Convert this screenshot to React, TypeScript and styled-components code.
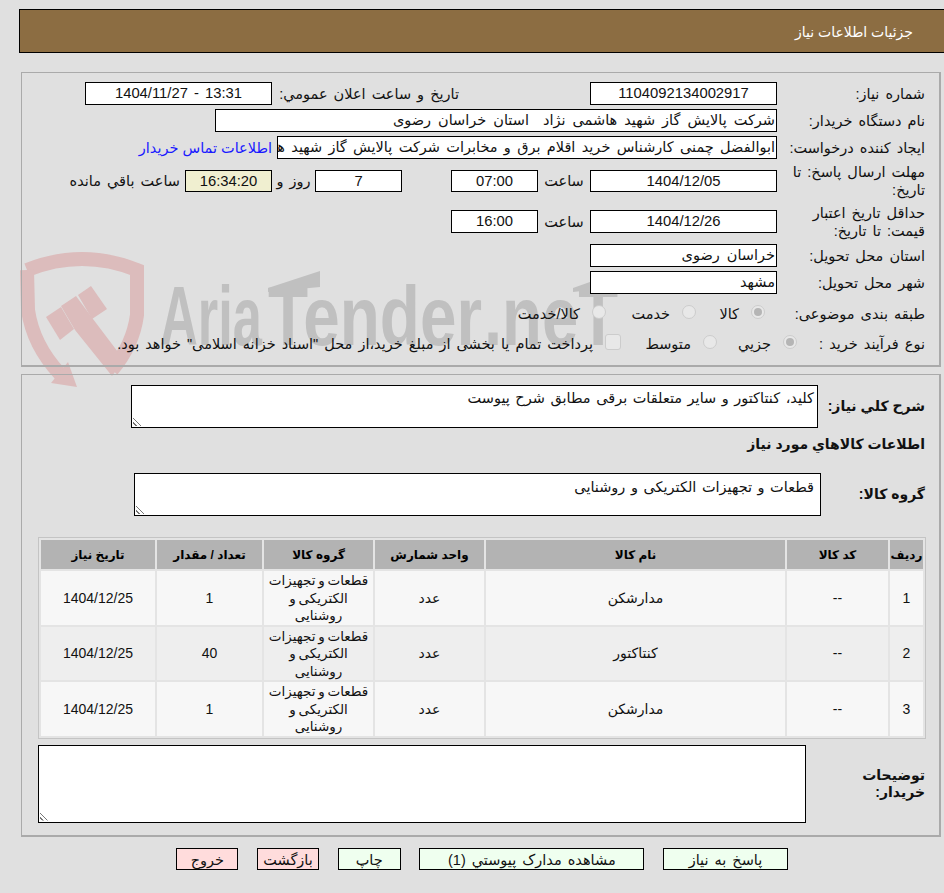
import styled, { createGlobalStyle } from "styled-components";

const GlobalStyle = createGlobalStyle`
    html, body {
        margin: 0;
        padding: 0;
        background: #e0e0e0;
    }
    body {
        font-family: "Liberation Sans", "DejaVu Sans", sans-serif;
        font-size: 14.5px;
        word-spacing: 2px;
        color: #111;
        overflow: hidden;
    }
`;

const Page = styled.div`
    position: relative;
    width: 944px;
    height: 893px;
    direction: rtl;
    overflow: hidden;
`;

const Header = styled.div`
    height: 42px;
    margin: 9px 0 0 19px;
    border: 1px solid #000;
    border-right: none;
    background: #8c6d42;
    color: #fff;
    font-size: 14px;
    line-height: 44px;
    padding-right: 31px;
    word-spacing: 0;
`;

const Panel = styled.div`
    position: relative;
    box-sizing: border-box;
    margin: 0 3px 0 0;
    margin-left: 21px;
    border: 1px solid #aaa;
    border-width: 1px 2px 2px 1px;
`;

const TopPanel = styled(Panel)`
    margin-top: 19px;
    height: 295px;
    padding: 9px 14px 0 0;
`;

const BottomPanel = styled(Panel)`
    margin-top: 7px;
    height: 463px;
    padding: 10px 14px 0 0;
`;

const Watermark = styled.svg`
    position: absolute;
    left: 0;
    top: 0;
    width: 944px;
    height: 400px;
    direction: ltr;
    word-spacing: 0;
`;

const Row = styled.div<{ $h?: number; $mt?: number }>`
    position: relative;
    display: flex;
    align-items: center;
    height: ${(p) => p.$h ?? 23}px;
    margin-top: ${(p) => p.$mt ?? 4}px;
`;

const Label = styled.div`
    width: 148px;
    flex: none;
    line-height: 18px;
    padding-left: 2px;
    box-sizing: border-box;
`;

const Field = styled.div<{ $w: number; $center?: boolean; $bg?: string; $ws?: number }>`
    width: ${(p) => p.$w}px;
    height: 100%;
    flex: none;
    box-sizing: border-box;
    border: 1px solid #000;
    background: ${(p) => p.$bg ?? "#fff"};
    text-align: ${(p) => (p.$center ? "center" : "right")};
    padding: 0 1px;
    font-size: ${(p) => (p.$center ? 14.8 : 14.5)}px;
    word-spacing: ${(p) => p.$ws ?? (p.$center ? 2 : 3)}px;
    line-height: 21px;
    white-space: nowrap;
    overflow: hidden;
`;

const Caption = styled.div<{ $w?: number; $pr?: number }>`
    flex: none;
    box-sizing: border-box;
    width: ${(p) => (p.$w ? `${p.$w}px` : "auto")};
    padding-right: ${(p) => p.$pr ?? 0}px;
    text-align: ${(p) => (p.$pr ? "right" : "center")};
    white-space: nowrap;
`;

const Link = styled.a`
    color: #1a1aff;
    margin-right: 5px;
    white-space: nowrap;
    word-spacing: 0;
`;

const Radio = styled.span<{ $on?: boolean }>`
    flex: none;
    width: 14px;
    height: 14px;
    margin-bottom: 5px;
    border-radius: 50%;
    border: 1px solid #ccc;
    background: #e8e8e8;
    box-sizing: border-box;
    display: flex;
    align-items: center;
    justify-content: center;
    &::after {
        content: "";
        display: ${(p) => (p.$on ? "block" : "none")};
        width: 8px;
        height: 8px;
        border-radius: 50%;
        background: #b5b5b5;
    }
`;

const Check = styled.span`
    flex: none;
    width: 16px;
    height: 16px;
    margin-bottom: 5px;
    border-radius: 3px;
    border: 1px solid #ccc;
    background: #e8e8e8;
    box-sizing: border-box;
`;

const Choice = styled.div<{ $w: number; $mr?: number }>`
    flex: none;
    width: ${(p) => p.$w}px;
    margin-right: ${(p) => p.$mr ?? 0}px;
    display: flex;
    align-items: center;
    gap: 12px;
    white-space: nowrap;
`;

const BoldRow = styled.div<{ $mt?: number }>`
    display: flex;
    align-items: center;
    margin-top: ${(p) => p.$mt ?? 0}px;
`;

const Heading = styled.div<{ $mt?: number }>`
    margin-top: ${(p) => p.$mt ?? 0}px;
    font-size: 14px;
    font-weight: bold;
    line-height: 17px;
    word-spacing: 0;
`;

const SideLabel = styled.div<{ $w: number; $pl?: number }>`
    width: ${(p) => p.$w}px;
    box-sizing: border-box;
    padding-left: ${(p) => p.$pl ?? 0}px;
    flex: none;
    font-size: 14px;
    font-weight: bold;
    line-height: 17px;
    word-spacing: 0;
`;

const Area = styled.div<{ $w: number; $h: number; $pr?: number; $pt?: number }>`
    position: relative;
    width: ${(p) => p.$w}px;
    height: ${(p) => p.$h}px;
    flex: none;
    box-sizing: border-box;
    border: 1px solid #000;
    background: #fff;
    padding: ${(p) => p.$pt ?? 4}px ${(p) => p.$pr ?? 3}px 0 3px;
    word-spacing: 1.5px;
    &::after {
        content: "";
        position: absolute;
        left: 1px;
        bottom: 1px;
        width: 9px;
        height: 9px;
        background: repeating-linear-gradient(45deg, transparent 0 2px, #777 2px 3px);
        clip-path: polygon(0 0, 100% 100%, 0 100%);
    }
`;

const ItemsTable = styled.table`
    width: 888px;
    margin: 21px -1px 0 0;
    border-collapse: separate;
    border-spacing: 2px;
    border: 1px solid #c4c4c4;
    background: #e4e4e4;
    table-layout: fixed;
    text-align: center;
    font-size: 14px;
    word-spacing: 0;

    th {
        background: #b3b3b3;
        height: 29px;
        padding: 0;
        font-size: 12px;
        color: #000;
    }
    td {
        height: 52.5px;
        padding: 1px 0 0;
        line-height: 17.5px;
    }
    tbody tr:nth-child(odd) td {
        background: #f7f7f7;
    }
    tbody tr:nth-child(even) td {
        background: #eeeeee;
    }
`;

const GroupCell = styled.td`
    && {
        padding: 1px 4px 0;
    }
    font-size: 13.5px;
    word-spacing: -1px;
`;

const Col = styled.col<{ $w: number }>`
    width: ${(p) => p.$w}px;
`;

const Footer = styled.div`
    display: flex;
    margin: 11px 156px 0 0;
    gap: 18.67px;
`;

const Action = styled.button<{ $w: number; $danger?: boolean }>`
    width: ${(p) => p.$w}px;
    height: 22px;
    box-sizing: border-box;
    border: 1px solid #000;
    border-radius: 0;
    padding: 2px 0 0;
    background: ${(p) => (p.$danger ? "#ffdcdc" : "#efffef")};
    color: #111;
    font: inherit;
    word-spacing: inherit;
`;

const items = [
    { n: 1, name: "مدارشکن", qty: 1 },
    { n: 2, name: "کنتاکتور", qty: 40 },
    { n: 3, name: "مدارشکن", qty: 1 },
];

const columns = [33, 101, 299, 109, 109, 105, 114];

const App = () => {
    return (
        <Page>
            <GlobalStyle />
            <Watermark viewBox="0 0 944 400">
                <g fill="none" stroke="#dcbcbc" strokeWidth="14">
                    <path d="M27 270 Q82 248 137 270 L137 315 Q133 345 112 370" />
                    <path d="M27 270 L28 310 Q33 345 60 374" />
                </g>
                <g fill="#dcbcbc">
                    <path d="M68 362 L77 387 L51 383Z" />
                    <path d="M46 317 L61 307 L74 329 L60 340Z" />
                    <path d="M61 306 L76 296 L93 319 L124 360 L112 376 L75 330Z" />
                    <path d="M78 295 L91 286 L107 309 L92 319Z" />
                </g>
                <g fontFamily="'Liberation Sans', sans-serif" fontWeight="bold" fontSize="84" fill="#c0c0c0">
                    <text x="160" y="345" textLength="102" lengthAdjust="spacingAndGlyphs">Aria</text>
                    <text x="268" y="345" textLength="214" lengthAdjust="spacingAndGlyphs">Tender</text>
                    <text x="484" y="345" textLength="134" lengthAdjust="spacingAndGlyphs">.neT</text>
                    <path d="M268 288 L320 271 L320 287 L268 292Z" />
                    <path d="M573 288 L618 272 L618 287 L573 292Z" />
                </g>
            </Watermark>
            <Header>جزئیات اطلاعات نیاز</Header>
            <TopPanel>
                <Row $mt={0}>
                    <Label>شماره نیاز:</Label>
                    <Field $w={187} $center>1104092134002917</Field>
                    <Caption $w={318} $pr={131}>تاریخ و ساعت اعلان عمومي:</Caption>
                    <Field $w={187} $center>13:31 - 1404/11/27</Field>
                </Row>
                <Row>
                    <Label>نام دستگاه خریدار:</Label>
                    <Field $w={562}>شرکت پالایش گاز شهید هاشمی نژاد&nbsp; استان خراسان رضوی</Field>
                </Row>
                <Row>
                    <Label>ایجاد کننده درخواست:</Label>
                    <Field $w={500} $ws={2.3}>ابوالفضل چمنی کارشناس خرید اقلام برق و مخابرات شرکت پالایش گاز شهید هاشمی نژاد</Field>
                    <Link>اطلاعات تماس خریدار</Link>
                </Row>
                <Row $h={22} $mt={11}>
                    <Label>مهلت ارسال پاسخ: تا تاریخ:</Label>
                    <Field $w={187} $center>1404/12/05</Field>
                    <Caption $w={52}>ساعت</Caption>
                    <Field $w={87} $center>07:00</Field>
                    <Caption $w={49} />
                    <Field $w={87} $center>7</Field>
                    <Caption $w={43}>روز و</Caption>
                    <Field $w={87} $center $bg="#f0efd0">16:34:20</Field>
                    <Caption $pr={5}>ساعت باقي مانده</Caption>
                </Row>
                <Row $mt={18}>
                    <Label>حداقل تاریخ اعتبار قیمت: تا تاریخ:</Label>
                    <Field $w={187} $center>1404/12/26</Field>
                    <Caption $w={52}>ساعت</Caption>
                    <Field $w={87} $center>16:00</Field>
                </Row>
                <Row $mt={11}>
                    <Label>استان محل تحویل:</Label>
                    <Field $w={187}>خراسان رضوی</Field>
                </Row>
                <Row>
                    <Label>شهر محل تحویل:</Label>
                    <Field $w={187}>مشهد</Field>
                </Row>
                <Row $h={20} $mt={10}>
                    <Label>طبقه بندی موضوعی:</Label>
                    <Choice $w={69} $mr={12}><Radio $on />کالا</Choice>
                    <Choice $w={90}><Radio />خدمت</Choice>
                    <Choice $w={120}><Radio />کالا/خدمت</Choice>
                </Row>
                <Row $h={20} $mt={10}>
                    <Label>نوع فرآیند خرید :</Label>
                    <Choice $w={80} $mr={-20}><Radio $on />جزيي</Choice>
                    <Choice $w={96}><Radio />متوسط</Choice>
                    <Choice $w={510}><Check />پرداخت تمام یا بخشی از مبلغ خرید،از محل "اسناد خزانه اسلامی" خواهد بود.</Choice>
                </Row>
            </TopPanel>
            <BottomPanel>
                <BoldRow>
                    <SideLabel $w={107}>شرح کلي نیاز:</SideLabel>
                    <Area $w={687} $h={43}>کلید، کنتاکتور و سایر متعلقات برقی مطابق شرح پیوست</Area>
                </BoldRow>
                <Heading $mt={8}>اطلاعات کالاهاي مورد نیاز</Heading>
                <BoldRow $mt={20}>
                    <SideLabel $w={104}>گروه کالا:</SideLabel>
                    <Area $w={687} $h={43} $pr={6} $pt={5}>قطعات و تجهیزات الکتریکی و روشنایی</Area>
                </BoldRow>
                <ItemsTable>
                    <colgroup>
                        {columns.map((w, i) => (
                            <Col key={i} $w={w} />
                        ))}
                    </colgroup>
                    <thead>
                        <tr>
                            <th>ردیف</th>
                            <th>کد کالا</th>
                            <th>نام کالا</th>
                            <th>واحد شمارش</th>
                            <th>گروه کالا</th>
                            <th>تعداد / مقدار</th>
                            <th>تاریخ نیاز</th>
                        </tr>
                    </thead>
                    <tbody>
                        {items.map((item) => (
                            <tr key={item.n}>
                                <td>{item.n}</td>
                                <td>--</td>
                                <td>{item.name}</td>
                                <td>عدد</td>
                                <GroupCell>قطعات و تجهیزات الکتریکی و روشنایی</GroupCell>
                                <td>{item.qty}</td>
                                <td>1404/12/25</td>
                            </tr>
                        ))}
                    </tbody>
                </ItemsTable>
                <BoldRow $mt={6}>
                    <SideLabel $w={119} $pl={40}>توضیحات خریدار:</SideLabel>
                    <Area $w={768} $h={78} />
                </BoldRow>
            </BottomPanel>
            <Footer>
                <Action $w={125}>پاسخ به نیاز</Action>
                <Action $w={225}>مشاهده مدارک پیوستي (1)</Action>
                <Action $w={63}>چاپ</Action>
                <Action $w={62} $danger>بازگشت</Action>
                <Action $w={62} $danger>خروج</Action>
            </Footer>
        </Page>
    );
};

export default App;
